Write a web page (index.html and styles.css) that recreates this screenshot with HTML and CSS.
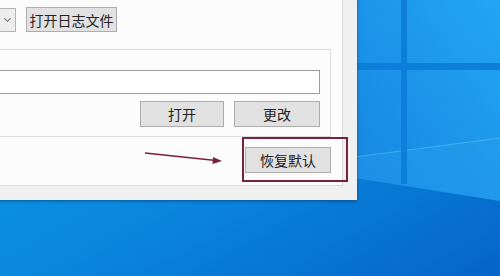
FILE: index.html
```html
<!DOCTYPE html>
<html lang="zh-CN">
  <head>
    <meta charset="UTF-8" />
    <title>恢复默认</title>
    <link rel="stylesheet" href="styles.css">
  </head>
  <body>
    <!-- Desktop wallpaper -->
    <svg class="wallpaper" width="500" height="276" viewBox="0 0 500 276">
      <defs>
        <linearGradient id="bg" x1="0" y1="0" x2="1" y2="1">
          <stop offset="0" stop-color="#0aa2ec" />
          <stop offset="0.55" stop-color="#0a86dd" />
          <stop offset="1" stop-color="#0564c8" />
        </linearGradient>
        <linearGradient id="pane" x1="0" y1="1" x2="1" y2="0">
          <stop offset="0" stop-color="#1784e0" />
          <stop offset="1" stop-color="#22a6f3" />
        </linearGradient>
      </defs>
      <rect width="500" height="276" fill="url(#bg)" />
      <polygon points="355,0 500,0 500,201 355,178" fill="url(#pane)" />
      <polygon points="355,157 500,138 500,201 355,178" fill="#2aa0ee" opacity="0.35" />
      <line x1="355" y1="157" x2="500" y2="138" stroke="#5cc0f6" stroke-width="1.2" opacity="0.6" />
      <rect x="401" y="0" width="6" height="184" fill="#0d7ed9" />
      <rect x="355" y="63" width="145" height="7" fill="#0d7ed9" />
    </svg>

    <!-- Dialog window -->
    <div class="dialog">
      <div class="panel">
        <div class="top-row">
          <div class="combo"><span class="chevron"></span></div>
          <button class="btn btn-log">打开日志文件</button>
        </div>

        <div class="group">
          <input class="path-input" type="text" value="" />
          <div class="btn-row">
            <button class="btn btn-small">打开</button>
            <button class="btn btn-small">更改</button>
          </div>
        </div>

        <div class="reset-row">
          <button class="btn btn-small">恢复默认</button>
        </div>
      </div>

      <!-- Annotation -->
      <div class="highlight"></div>
      <svg class="arrow" width="377" height="210" viewBox="0 0 377 210">
        <line x1="165" y1="163" x2="236" y2="170.5" stroke="#7b1f3e" stroke-width="1.6" />
        <polygon points="242,171 233,167 232.5,174" fill="#7b1f3e" />
      </svg>
    </div>
  </body>
</html>
```

FILE: styles.css
```css
* {
  box-sizing: border-box;
}

body {
  margin: 0;
  width: 500px;
  height: 276px;
  overflow: hidden;
  position: relative;
  font-family: "Noto Sans CJK SC", "Microsoft YaHei", sans-serif;
  font-size: 14px;
  color: #222;
}

.wallpaper {
  position: absolute;
  top: 0;
  left: 0;
  display: block;
}

/* Dialog window (partly off screen) */
.dialog {
  position: absolute;
  top: -10px;
  left: -20px;
  width: 377px;
  height: 210px;
  background-color: #f0f0f0;
  padding: 0 14px 14px 0;
  box-shadow: 0 1px 3px rgba(0, 20, 60, 0.45);
}

.panel {
  height: 196px;
  background-color: #fcfcfc;
  border-right: 1px solid #dadada;
  border-bottom: 1px solid #dadada;
  padding: 17px 11px 0 10px;
  display: flex;
  flex-direction: column;
}

.top-row {
  display: flex;
  align-items: center;
  gap: 10px;
  margin-left: -10px;
}

.combo {
  width: 36px;
  height: 24px;
  background-color: #ededed;
  border: 1px solid #b4b4b4;
  border-left: none;
  display: flex;
  align-items: center;
  justify-content: flex-end;
  padding-right: 5px;
}

.chevron {
  width: 5px;
  height: 5px;
  border-right: 1px solid #777;
  border-bottom: 1px solid #777;
  transform: rotate(45deg);
  margin-top: -3px;
}

.btn {
  font-family: inherit;
  font-size: 14px;
  line-height: 1;
  color: #222;
  background-color: #e1e1e1;
  border: 1px solid #adadad;
  padding: 0;
  display: flex;
  align-items: center;
  justify-content: center;
}

.btn-log {
  width: 91px;
  height: 25px;
}

.btn-small {
  width: 86px;
  height: 26px;
}

/* Group box */
.group {
  margin-top: 17px;
  border: 1px solid #dcdcdc;
  padding: 20px 10px 9px 0;
  display: flex;
  flex-direction: column;
}

.path-input {
  height: 24px;
  width: 100%;
  border: 1px solid #9c9c9c;
  background-color: #fff;
  font-family: inherit;
  font-size: 14px;
}

.btn-row {
  margin-top: 7px;
  display: flex;
  justify-content: flex-end;
  gap: 10px;
}

.btn-row .btn:first-child {
  width: 84px;
}

.reset-row {
  margin-top: 10px;
  display: flex;
  justify-content: flex-end;
}

/* Red annotation box and arrow */
.highlight {
  position: absolute;
  left: 262px;
  top: 147px;
  width: 106px;
  height: 45px;
  border: 2px solid #7b1f3e;
}

.arrow {
  position: absolute;
  top: 0;
  left: 0;
}
```
